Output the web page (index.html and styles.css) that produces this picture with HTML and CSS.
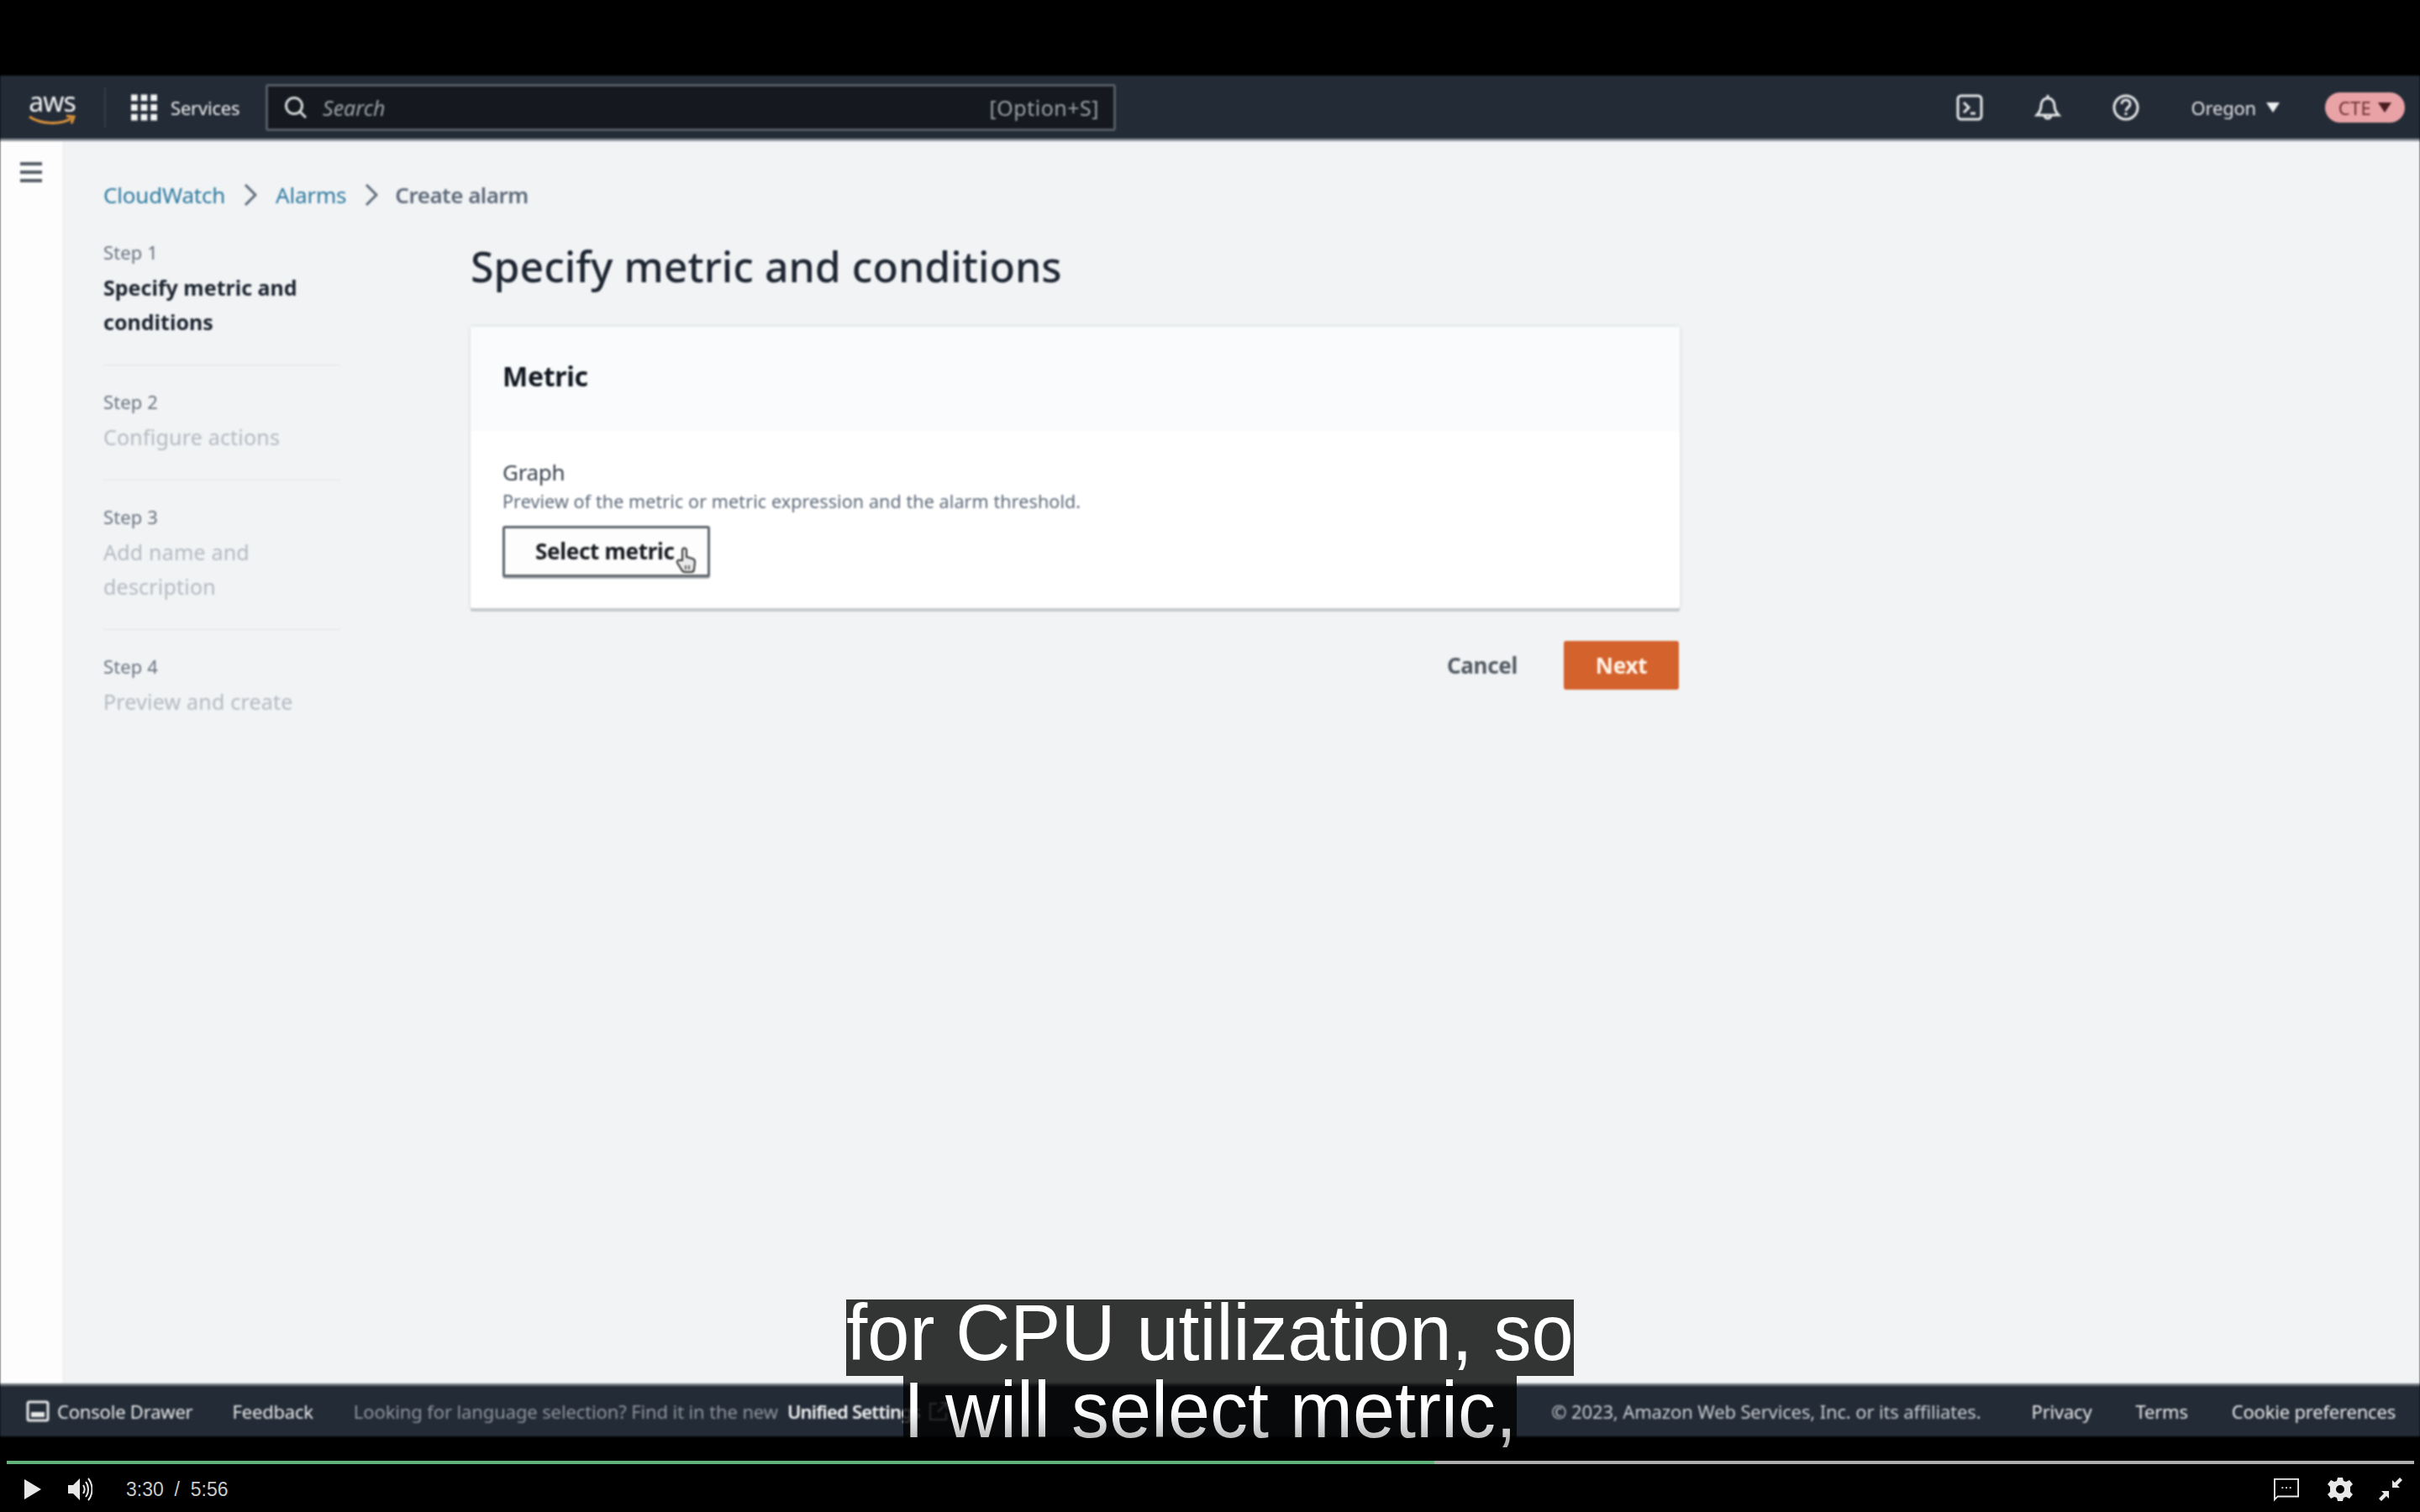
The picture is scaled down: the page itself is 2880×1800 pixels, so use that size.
FILE: index.html
```html
<!DOCTYPE html>
<html lang="en">
<head>
  <meta charset="UTF-8">
  <title>Create alarm | CloudWatch</title>
  <link rel="stylesheet" href="styles.css">
</head>
<body>
  <div class="player">
    <div class="screen">
      <header class="nav">
        <div class="logo">
          <span class="logo-text">aws</span>
          <svg class="logo-smile" viewBox="0 0 58 14"><path d="M2 3c14 9 36 10 50 2M46 2l9 1-3 8" fill="none" stroke="#e0963a" stroke-width="3"/></svg>
        </div>
        <span class="nav-sep"></span>
        <svg class="grid-icon" viewBox="0 0 32 32" fill="#f2f3f3"><rect x="0" y="0" width="8" height="8"/><rect x="12" y="0" width="8" height="8"/><rect x="24" y="0" width="8" height="8"/><rect x="0" y="12" width="8" height="8"/><rect x="12" y="12" width="8" height="8"/><rect x="24" y="12" width="8" height="8"/><rect x="0" y="24" width="8" height="8"/><rect x="12" y="24" width="8" height="8"/><rect x="24" y="24" width="8" height="8"/></svg>
        <span class="services">Services</span>
        <div class="search">
          <svg class="search-icon" viewBox="0 0 28 28" fill="none" stroke="#d5dbdb" stroke-width="3"><circle cx="12" cy="12" r="9.5"/><path d="M19 19l7 7"/></svg>
          <span class="search-text">Search</span>
          <span class="search-key">[Option+S]</span>
        </div>
        <div class="nav-right">
          <svg class="nav-icon" viewBox="0 0 32 32" fill="none" stroke="#e6e8e8" stroke-width="3"><rect x="2" y="2" width="28" height="28" rx="4"/><path d="M9 10l6 6-6 6M17 23h6"/></svg>
          <svg class="nav-icon" viewBox="0 0 32 32" fill="none" stroke="#e6e8e8" stroke-width="3"><path d="M3 25c3-3 5-6 5-11 0-5 3-9 8-9s8 4 8 9c0 5 2 8 5 11zM16 1v4M12 25a4 4 0 0 0 8 0"/></svg>
          <svg class="nav-icon" viewBox="0 0 32 32" fill="none" stroke="#e6e8e8" stroke-width="3"><circle cx="16" cy="16" r="14"/><path d="M11 12c0-3 2-5 5-5s5 2 5 5c0 4-5 4-5 8M16 22v3"/></svg>
          <span class="region">Oregon</span>
          <span class="caret caret-light"></span>
          <span class="account">CTE <span class="caret caret-dark"></span></span>
        </div>
      </header>

      <div class="body">
        <aside class="rail">
          <div class="burger"><span></span><span></span><span></span></div>
        </aside>
        <main class="content">
          <nav class="crumbs">
            <a class="crumb-link">CloudWatch</a>
            <svg class="crumb-sep" viewBox="0 0 16 28" fill="none" stroke="#5f6b7a" stroke-width="3"><path d="M2 2l12 12L2 26"/></svg>
            <a class="crumb-link">Alarms</a>
            <svg class="crumb-sep" viewBox="0 0 16 28" fill="none" stroke="#5f6b7a" stroke-width="3"><path d="M2 2l12 12L2 26"/></svg>
            <span class="crumb-here">Create alarm</span>
          </nav>
          <div class="wizard">
            <ol class="steps">
              <li class="step">
                <div class="step-num">Step 1</div>
                <div class="step-title step-active">Specify metric and conditions</div>
              </li>
              <li class="step">
                <div class="step-num">Step 2</div>
                <div class="step-title">Configure actions</div>
              </li>
              <li class="step">
                <div class="step-num">Step 3</div>
                <div class="step-title">Add name and description</div>
              </li>
              <li class="step">
                <div class="step-num">Step 4</div>
                <div class="step-title">Preview and create</div>
              </li>
            </ol>
            <section class="form">
              <h1>Specify metric and conditions</h1>
              <div class="card">
                <div class="card-head"><h2>Metric</h2></div>
                <div class="card-body">
                  <div class="label">Graph</div>
                  <div class="hint">Preview of the metric or metric expression and the alarm threshold.</div>
                  <button class="btn-select">Select metric
                    <svg class="hand" viewBox="0 0 24 34"><path d="M8 17V5a2.500 2.500 0 0 1 5 0v8l7 2c2 .6 3 2 3 4l-1 9c-.3 2-1 3-3 3h-8c-2 0-3-1-4-3l-5-8c-1-2 1-4 3-3z" fill="#e9eaeb" stroke="#333" stroke-width="2"/><path d="M12 23v5M16 23v5" stroke="#333" stroke-width="1.500"/></svg>
                  </button>
                </div>
              </div>
              <div class="actions">
                <span class="cancel">Cancel</span>
                <button class="btn-next">Next</button>
              </div>
            </section>
          </div>
        </main>
      </div>

      <footer class="foot">
        <svg class="drawer-icon" viewBox="0 0 28 26" fill="none" stroke="#e6e8e8" stroke-width="3"><rect x="2" y="2" width="24" height="22" rx="2"/><rect x="6" y="14" width="16" height="6" fill="#e6e8e8" stroke="none"/></svg>
        <span class="foot-item drawer">Console Drawer</span>
        <span class="foot-item feedback">Feedback</span>
        <span class="foot-note">Looking for language selection? Find it in the new</span>
        <span class="foot-item unified">Unified Settings</span>
        <svg class="ext-icon" viewBox="0 0 24 24" fill="none" stroke="#c8ccd0" stroke-width="2"><path d="M10 3H2v19h19v-8M14 2h8v8M22 2L11 13"/></svg>
        <div class="foot-right">
          <span class="foot-copy">© 2023, Amazon Web Services, Inc. or its affiliates.</span>
          <span class="foot-item">Privacy</span>
          <span class="foot-item">Terms</span>
          <span class="foot-item">Cookie preferences</span>
        </div>
      </footer>
    </div>

    <div class="controls">
      <div class="track"><div class="track-done" style="width: 59.3%"></div></div>
      <div class="ctrl-row">
        <svg class="play" viewBox="0 0 20 24"><path d="M0 0l20 12L0 24z" fill="#e8e8e8"/></svg>
        <svg class="volume" viewBox="0 0 30 30" fill="none" stroke="#e8e8e8" stroke-width="2"><path d="M1 10h6l8-8v26l-8-8H1z" fill="#e8e8e8" stroke="none"/><path d="M19 10c2 3 2 7 0 10M22 6c4 5 4 13 0 18M25 2c6 7 6 19 0 26"/></svg>
        <span class="time">3:30 &nbsp;/&nbsp; 5:56</span>
        <div class="ctrl-right">
          <svg class="ctrl-icon" viewBox="0 0 32 30" fill="none" stroke="#e8e8e8" stroke-width="2"><path d="M1 2h30v22H5l-4 4z"/><path d="M10 13h2M15 13h2M20 13h2" stroke-width="2"/></svg>
          <svg class="ctrl-icon gear" viewBox="0 0 30 30"><path fill="#e8e8e8" fill-rule="evenodd" d="M12 1h6l1 4 3 1 4-2 4 5-3 3v6l3 3-4 5-4-2-3 1-1 4h-6l-1-4-3-1-4 2-4-5 3-3v-6l-3-3 4-5 4 2 3-1zM15 10a5 5 0 1 0 0 10 5 5 0 0 0 0-10z"/></svg>
          <svg class="ctrl-icon shrink" viewBox="0 0 30 30" fill="#e8e8e8"><path d="M17 13V4l3 3 6-6 3 3-6 6 3 3zM13 17v9l-3-3-6 6-3-3 6-6-3-3z"/></svg>
        </div>
      </div>
    </div>

    <div class="caption">
      <div class="cue"><span class="cue-box"><em class="cue-top">for CPU utilization, so</em></span></div>
      <div class="cue"><span class="cue-box"><em class="cue-low">I will select metric,</em></span></div>
    </div>
  </div>
</body>
</html>
```

FILE: styles.css
```css
* { box-sizing: border-box; }
html, body { margin: 0; height: 100%; }
body { background: #000; font-family: "Noto Sans", sans-serif; }

.player { position: relative; height: 1800px; padding-top: 90px; display: flex; flex-direction: column; overflow: hidden; }
.screen { flex: 1; display: flex; flex-direction: column; min-height: 0; filter: blur(1px); }

/* top bar */
.nav { height: 78px; background: #232b37; border-bottom: 3px solid #8a9097; display: flex; align-items: center; padding-left: 33px; color: #eef0f0; font-size: 22px; flex: none; }
.logo { width: 58px; display: flex; flex-direction: column; align-items: center; }
.logo-text { font-size: 32px; line-height: 30px; letter-spacing: -1px; color: #f2f3f3; }
.logo-smile { width: 58px; height: 14px; display: block; }
.nav-sep { width: 2px; height: 48px; background: #333c49; margin: 0 30px 0 33px; }
.grid-icon { width: 31px; height: 32px; }
.services { margin-left: 16px; width: 82px; font-size: 22px; letter-spacing: -0.2px; white-space: nowrap; }
.search { margin-left: 31px; width: 1012px; height: 56px; background: #15181e; border: 3px solid #555c64; border-radius: 3px; display: flex; align-items: center; padding: 0 17px 0 19px; }
.search-icon { width: 28px; height: 28px; }
.search-text { margin-left: 18px; font-style: italic; font-size: 25px; color: #9aa1a8; }
.search-key { margin-left: auto; font-size: 25px; letter-spacing: 0.5px; color: #9aa1a8; }
.nav-right { margin-left: auto; display: flex; align-items: center; padding-right: 18px; }
.nav-icon { width: 32px; height: 32px; margin-right: 61px; }
.nav-icon:nth-child(3) { margin-right: 62px; }
.region { font-size: 22px; color: #dfe2e4; letter-spacing: -0.2px; }
.caret { display: inline-block; width: 0; height: 0; border-left: 8px solid transparent; border-right: 8px solid transparent; border-top: 12px solid #eef0f0; }
.caret-light { margin: 0 54px 0 12px; }
.caret-dark { border-top-color: #4a1c20; margin-left: 8px; }
.account { width: 95px; height: 36px; border-radius: 18px; background: #e9a3a7; color: #6e3034; font-size: 22px; display: flex; align-items: center; justify-content: center; letter-spacing: 0.3px; }

/* page */
.body { flex: 1; display: flex; min-height: 0; }
.rail { width: 76px; background: #fdfdfd; border-right: 1px solid #e4e6e8; flex: none; padding: 25px 0 0 24px; }
.burger span { display: block; width: 26px; height: 4px; background: #555d66; margin-bottom: 6px; }
.content { flex: 1; background: #f1f3f5; padding: 44px 0 0 47px; }

.crumbs { display: flex; align-items: center; height: 40px; font-size: 26px; letter-spacing: -0.2px; }
.crumb-link { color: #2f7ba0; }
.crumb-here { color: #5f6b7a; font-weight: 600; letter-spacing: -0.5px; margin-left: -2px; }
.crumb-sep { width: 16px; height: 28px; margin: 0 22px; }

.wizard { display: flex; margin-top: 33px; }
.steps { list-style: none; margin: 0 155px 0 0; padding: 0; width: 282px; flex: none; }
.step { padding: 28px 0 30px; border-bottom: 1px solid #e1e4e7; }
.step:first-child { padding-top: 0; }
.step:last-child { border-bottom: 0; }
.step-num { font-size: 22px; line-height: 30px; color: #6b7480; letter-spacing: 0.1px; }
.step-title { margin-top: 7px; font-size: 25px; line-height: 41px; color: #b5bbc1; letter-spacing: 0.2px; }
.step-active { color: #1d2530; font-weight: 700; width: 250px; letter-spacing: 0; }

.form { width: 1439px; }
h1 { margin: 2px 0 42px; font-size: 50px; line-height: 60px; font-weight: 500; color: #1f2733; }
.card { background: #fff; box-shadow: 0 4px 0 #c6c9cc, 0 0 4px #d0d3d6; border-radius: 2px; }
.card-head { height: 124px; background: #fafbfc; padding: 0 38px; display: flex; align-items: center; }
h2 { margin: -8px 0 0; font-size: 32px; font-weight: 700; color: #111820; letter-spacing: -0.3px; }
.card-body { padding: 31px 38px 37px; }
.label { font-size: 26px; line-height: 36px; color: #39424e; letter-spacing: -0.3px; }
.hint { margin-top: 2px; font-size: 21.500px; line-height: 30px; color: #5f6b7a; letter-spacing: 0.1px; }
.btn-select { display: block; position: relative; margin-top: 14px; width: 247px; height: 61px; background: #fdfdfd; border: 3px solid #5d646c; border-radius: 3px; box-shadow: 0 2px 0 #b0b4b8; font: 700 26px "Noto Sans", sans-serif; color: #16191f; letter-spacing: -0.3px; text-align: left; padding: 0 0 2px 36px; }
.hand { position: absolute; left: 203px; top: 21px; width: 24px; height: 34px; }

.actions { display: flex; justify-content: flex-end; align-items: center; margin-top: 39px; padding-right: 1px; }
.cancel { font-size: 26px; font-weight: 700; color: #545b64; margin-right: 55px; letter-spacing: -0.3px; }
.btn-next { width: 137px; height: 58px; background: #d4622c; border: 0; border-radius: 3px; color: #fff4e8; font: 700 26px "Noto Sans", sans-serif; letter-spacing: -0.3px; }

/* footer bar */
.foot { height: 63px; flex: none; background: #232b37; border-top: 3px solid #6f757c; display: flex; align-items: center; padding-left: 31px; font-size: 22px; color: #e6e8e8; }
.drawer-icon { width: 28px; height: 26px; }
.foot-item { letter-spacing: -0.2px; white-space: nowrap; }
.drawer { margin-left: 9px; }
.feedback { margin-left: 47px; }
.foot-note { margin-left: 48px; color: #8d949c; letter-spacing: -0.12px; white-space: nowrap; }
.unified { margin-left: 11px; font-weight: 600; color: #f2f3f3; letter-spacing: -0.8px; }
.ext-icon { width: 24px; height: 24px; margin-left: 10px; }
.foot-right { margin-left: auto; display: flex; gap: 52px; padding-right: 29px; }
.foot-copy { color: #c8ccd0; letter-spacing: -0.13px; margin-right: 8px; }

/* player controls */
.controls { height: 90px; flex: none; background: #000; padding-top: 29px; }
.track { margin: 0 7px 0 8px; height: 4px; background: #adadad; }
.track-done { height: 4px; background: #62b37a; }
.ctrl-row { display: flex; align-items: center; height: 30px; margin-top: 15px; padding-left: 29px; }
.play { width: 20px; height: 24px; }
.volume { width: 30px; height: 30px; margin-left: 31px; }
.time { margin-left: 40px; font-size: 23px; color: #c9c9c9; font-family: "Liberation Sans", sans-serif; }
.ctrl-right { margin-left: auto; display: flex; padding-right: 20px; }
.ctrl-icon { width: 30px; height: 30px; }
.gear { margin-left: 34px; }
.shrink { margin-left: 30px; }

/* subtitles sit on top of the video */
.caption { position: absolute; left: 0; right: 0; top: 1547px; text-align: center; font-family: "Liberation Sans", sans-serif; font-size: 90px; color: #fff; }
.cue { height: 91px; }
.cue-box { display: inline-block; vertical-align: top; height: 91px; line-height: 82px; background: rgba(0, 0, 0, 0.79); }
.cue-box em { display: inline-block; vertical-align: top; font-style: normal; transform: scaleY(1.05); }
.cue-box .cue-top { transform: translateY(-2px) scaleY(1.05); }
.cue-low { padding-bottom: 10px; background: linear-gradient(#fff 45%, #b0b0b0 85%); -webkit-background-clip: text; background-clip: text; color: transparent; }
```
